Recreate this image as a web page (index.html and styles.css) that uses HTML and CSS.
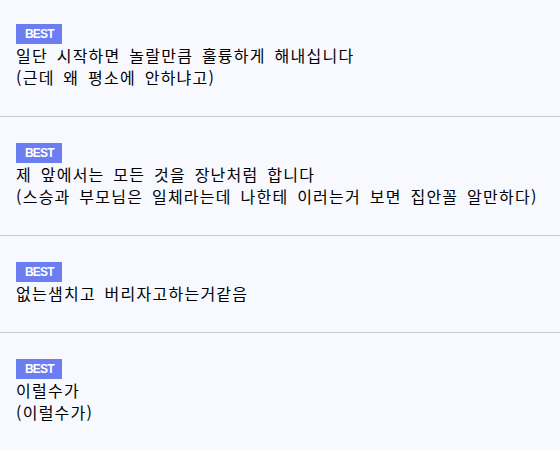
FILE: index.html
```html
<!DOCTYPE html>
<html lang="ko">
<head>
<meta charset="utf-8">
<link rel="stylesheet" href="styles.css">
</head>
<body>
<ul class="list">
  <li class="item">
    <span class="badge">BEST</span>
    <p class="line">일단 시작하면 놀랄만큼 훌륭하게 해내십니다</p>
    <p class="line">(근데 왜 평소에 안하냐고)</p>
  </li>
  <li class="item">
    <span class="badge">BEST</span>
    <p class="line">제 앞에서는 모든 것을 장난처럼 합니다</p>
    <p class="line">(스승과 부모님은 일체라는데 나한테 이러는거 보면 집안꼴 알만하다)</p>
  </li>
  <li class="item">
    <span class="badge">BEST</span>
    <p class="line">없는샘치고 버리자고하는거같음</p>
  </li>
  <li class="item">
    <span class="badge">BEST</span>
    <p class="line">이럴수가</p>
    <p class="line">(이럴수가)</p>
  </li>
</ul>
</body>
</html>
```
FILE: styles.css
```css
html, body {
  margin: 0;
  padding: 0;
  background: #f7f9fe;
}
body {
  font-family: "Noto Sans CJK KR", "Noto Sans", sans-serif;
  color: #000;
}
.list {
  list-style: none;
  margin: 0;
  padding: 0;
}
.item {
  display: flex;
  flex-direction: column;
  align-items: flex-start;
  padding: 26px 16px 28px;
  border-bottom: 1px solid #c9c9cd;
}
.item:first-child {
  padding-top: 24px;
}
.item:last-child {
  border-bottom: none;
}
.badge {
  display: block;
  height: 20px;
  line-height: 20px;
  padding: 0 8px 0 9px;
  background: #6a7ef2;
  color: #fff;
  font-family: "Liberation Sans", Arial, sans-serif;
  font-weight: bold;
  font-size: 12px;
  letter-spacing: -0.8px;
}
.line {
  margin: 0;
  font-size: 16px;
  font-weight: 400;
  line-height: 22px;
  letter-spacing: 1.25px;
  word-spacing: 3px;
  white-space: nowrap;
}
```
